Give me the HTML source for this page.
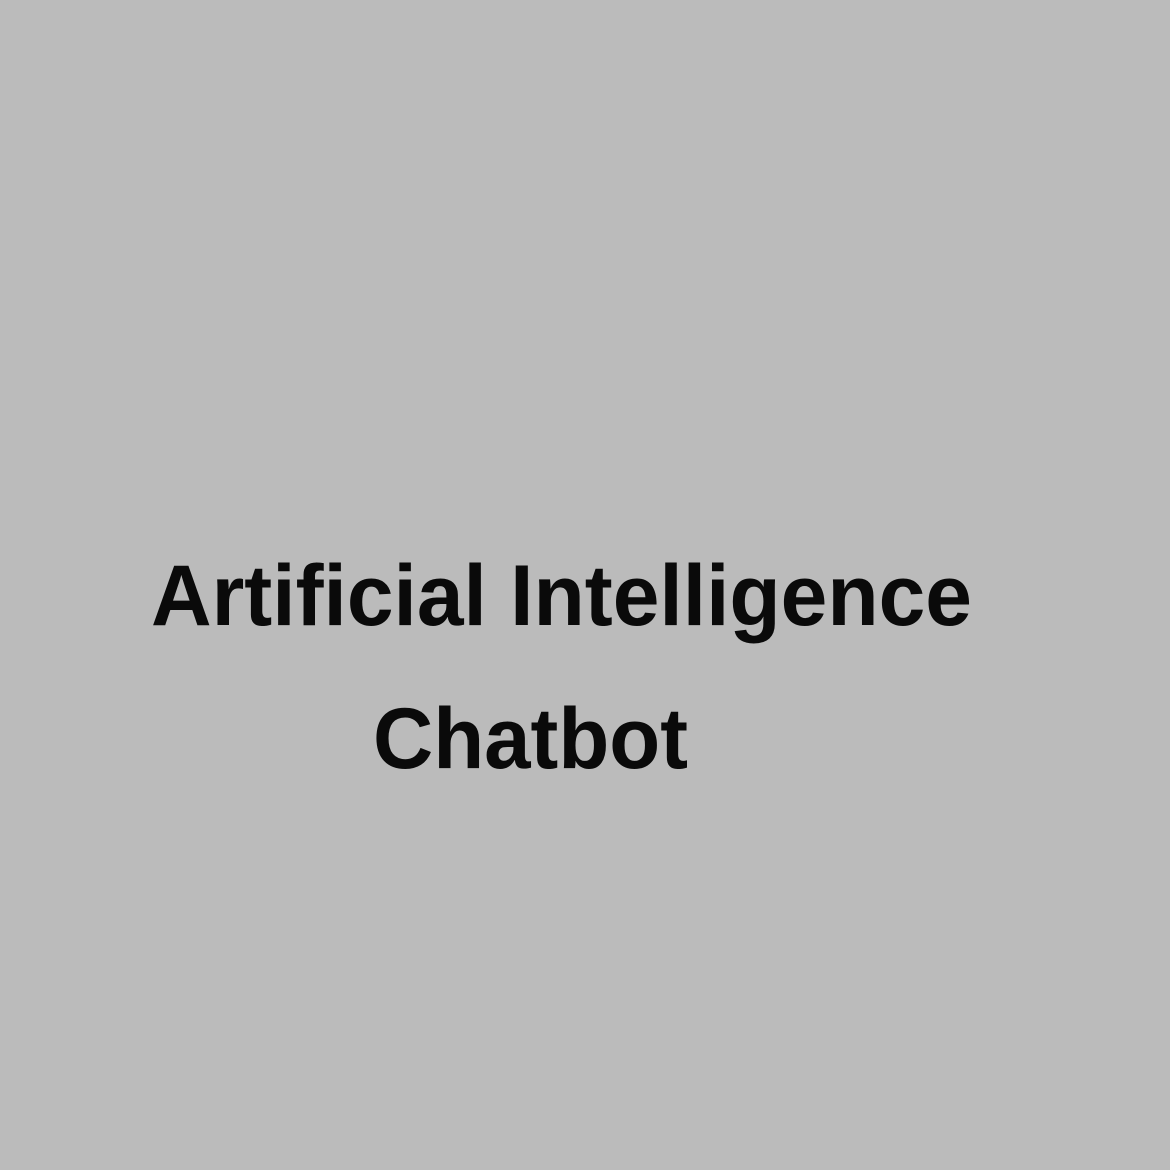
<!DOCTYPE html>
<html><head><meta charset="utf-8"><style>
html,body{margin:0;padding:0;background:#bbbbbb;width:1170px;height:1170px;overflow:hidden}
svg{display:block}
</style></head><body>
<svg width="1170" height="1170" xmlns="http://www.w3.org/2000/svg">
<rect width="1170" height="1170" fill="#bbbbbb"/>
<text x="151" y="625" font-family="Liberation Sans, sans-serif" font-weight="bold" font-size="86" fill="#0a0a0a" textLength="821" lengthAdjust="spacingAndGlyphs">Artificial Intelligence</text>
<text x="373" y="768" font-family="Liberation Sans, sans-serif" font-weight="bold" font-size="86" fill="#0a0a0a" textLength="315" lengthAdjust="spacingAndGlyphs">Chatbot</text>
</svg>
</body></html>
